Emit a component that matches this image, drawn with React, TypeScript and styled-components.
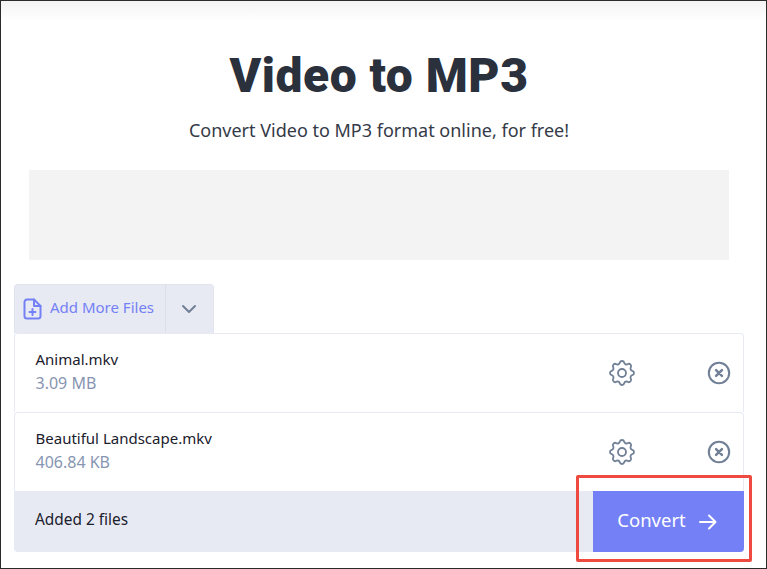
import React from "react";
import styled, { createGlobalStyle } from "styled-components";

const Global = createGlobalStyle`
  html, body { margin: 0; padding: 0; background: #fff; }
  body { font-family: "Noto Sans", "Liberation Sans", sans-serif; overflow: hidden; }
`;

const Frame = styled.div`
  position: relative;
  box-sizing: border-box;
  width: 767px;
  height: 569px;
  border: 1px solid #2b2b2b;
  background: linear-gradient(#f4f4f4, #fff 20px);
  overflow: hidden;
`;

const Page = styled.main`
  width: 756px;
  display: flex;
  flex-direction: column;
  align-items: center;
`;

const Title = styled.h1`
  margin: 45px 0 0;
  height: 60px;
  font-family: "Roboto", sans-serif;
  font-size: 48px;
  line-height: 60px;
  font-weight: 900;
  letter-spacing: 0.5px;
  color: #2a303c;
`;

const Subtitle = styled.p`
  margin: 11px 0 0;
  height: 26px;
  font-size: 18px;
  line-height: 26px;
  color: #343a46;
`;

const AdSlot = styled.div`
  margin-top: 27px;
  width: 700px;
  height: 90px;
  background: #f3f3f3;
`;

const Uploader = styled.section`
  margin-top: 24px;
  width: 730px;
  display: flex;
  flex-direction: column;
`;

const TabBar = styled.div`
  display: flex;
  width: 200px;
  height: 49px;
  box-sizing: border-box;
  background: #e7eaf3;
  border: 1px solid #e1e4ee;
  border-bottom: 0;
  border-radius: 4px 4px 0 0;
`;

const AddButton = styled.div`
  flex: 1;
  display: flex;
  align-items: center;
  gap: 8px;
  padding-left: 8px;
  color: #7480f5;
  font-size: 15px;
  border-right: 1px solid #dcdfe9;
`;

const AddLabel = styled.span`
  padding-bottom: 4px;
`;

const Caret = styled.div`
  width: 47px;
  display: flex;
  align-items: center;
  justify-content: center;
  padding-right: 2px;
  box-sizing: border-box;
  color: #718096;
`;

const FileList = styled.div`
  display: flex;
  flex-direction: column;
`;

const FileRow = styled.div`
  box-sizing: border-box;
  height: 79px;
  display: flex;
  align-items: center;
  padding: 0 11px 0 20.5px;
  border: 1px solid #e7eaf3;
  border-bottom: 0;
  border-radius: 4px 4px 0 0;
`;

const FileInfo = styled.div`
  flex: 1;
  display: flex;
  flex-direction: column;
  gap: 4px;
  padding-bottom: 4px;
`;

const FileName = styled.div`
  font-size: 15px;
  line-height: 20px;
  color: #1a202c;
`;

const FileSize = styled.div`
  font-size: 16px;
  line-height: 20px;
  color: #8795b1;
`;

const IconSlot = styled.div<{ $w: number }>`
  width: ${(p) => p.$w}px;
  display: flex;
  justify-content: flex-end;
  color: #718096;
`;

const Footer = styled.div`
  height: 61px;
  display: flex;
  align-items: center;
  justify-content: space-between;
  background: #e7eaf3;
  border-radius: 0 0 4px 4px;
  overflow: hidden;
`;

const Count = styled.div`
  padding: 0 0 4px 21px;
  font-size: 15.4px;
  color: #1a202c;
`;

const ConvertButton = styled.div`
  box-sizing: border-box;
  width: 151px;
  height: 61px;
  padding-right: 2px;
  display: flex;
  align-items: center;
  justify-content: center;
  gap: 12px;
  background: #7480f5;
  color: #fff;
  font-size: 18.5px;
`;

const ConvertLabel = styled.span`
  padding-bottom: 4px;
`;

const Highlight = styled.div`
  position: absolute;
  left: 575px;
  top: 474px;
  width: 176px;
  height: 87px;
  box-sizing: border-box;
  border: 3px solid #ef4a3f;
  border-radius: 2px;
`;

const Gear = () => (
  <svg width="32" height="32" viewBox="0 0 24 24" fill="none" stroke="currentColor" strokeWidth="1.35" strokeLinecap="round" strokeLinejoin="round">
    <path d="M10.325 4.317c.426-1.756 2.924-1.756 3.35 0a1.724 1.724 0 0 0 2.573 1.066c1.543-.94 3.31.826 2.37 2.37a1.724 1.724 0 0 0 1.065 2.572c1.756.426 1.756 2.924 0 3.35a1.724 1.724 0 0 0-1.066 2.573c.94 1.543-.826 3.31-2.37 2.37a1.724 1.724 0 0 0-2.572 1.065c-.426 1.756-2.924 1.756-3.35 0a1.724 1.724 0 0 0-2.573-1.066c-1.543.94-3.31-.826-2.37-2.37a1.724 1.724 0 0 0-1.065-2.572c-1.756-.426-1.756-2.924 0-3.35a1.724 1.724 0 0 0 1.066-2.573c-.94-1.543.826-3.31 2.37-2.37.996.608 2.296.07 2.572-1.065z" />
    <circle cx="12" cy="12" r="3" />
  </svg>
);

const CloseCircle = () => (
  <svg width="26" height="26" viewBox="0 0 24 24" fill="none" stroke="currentColor" strokeWidth="1.9" strokeLinecap="round" strokeLinejoin="round">
    <circle cx="12" cy="12" r="9.4" />
    <path d="M9.3 9.3l5.4 5.4M14.7 9.3l-5.4 5.4" strokeWidth="2.3" />
  </svg>
);

const FilePlus = () => (
  <svg width="19" height="22" viewBox="0 0 19 22" fill="none" stroke="currentColor" strokeWidth="2" strokeLinecap="round" strokeLinejoin="round">
    <path d="M11 1.5H4a2.5 2.5 0 0 0-2.5 2.5v14A2.5 2.5 0 0 0 4 20.5h11a2.5 2.5 0 0 0 2.5-2.5V8z" />
    <path d="M11 1.5V8h6.5M9.5 11v6M6.5 14h6" />
  </svg>
);

const ChevronDown = () => (
  <svg width="18" height="18" viewBox="0 0 18 18" fill="none" stroke="currentColor" strokeWidth="2" strokeLinecap="round" strokeLinejoin="round">
    <path d="M3 6l6 6 6-6" />
  </svg>
);

const ArrowRight = () => (
  <svg width="20" height="20" viewBox="0 0 20 20" fill="none" stroke="currentColor" strokeWidth="2" strokeLinecap="round" strokeLinejoin="round">
    <path d="M2 10h15M11 3.5l6.5 6.5-6.5 6.5" />
  </svg>
);

const files = [
  { name: "Animal.mkv", size: "3.09 MB" },
  { name: "Beautiful Landscape.mkv", size: "406.84 KB" },
];

export default function App() {
  return (
    <Frame>
      <Global />
      <Page>
        <Title>Video to MP3</Title>
        <Subtitle>Convert Video to MP3 format online, for free!</Subtitle>
        <AdSlot />
        <Uploader>
          <TabBar>
            <AddButton>
              <FilePlus />
              <AddLabel>Add More Files</AddLabel>
            </AddButton>
            <Caret>
              <ChevronDown />
            </Caret>
          </TabBar>
          <FileList>
            {files.map((f) => (
              <FileRow key={f.name}>
                <FileInfo>
                  <FileName>{f.name}</FileName>
                  <FileSize>{f.size}</FileSize>
                </FileInfo>
                <IconSlot $w={32}>
                  <Gear />
                </IconSlot>
                <IconSlot $w={94}>
                  <CloseCircle />
                </IconSlot>
              </FileRow>
            ))}
          </FileList>
          <Footer>
            <Count>Added 2 files</Count>
            <ConvertButton>
              <ConvertLabel>Convert</ConvertLabel>
              <ArrowRight />
            </ConvertButton>
          </Footer>
        </Uploader>
      </Page>
      <Highlight />
    </Frame>
  );
}
